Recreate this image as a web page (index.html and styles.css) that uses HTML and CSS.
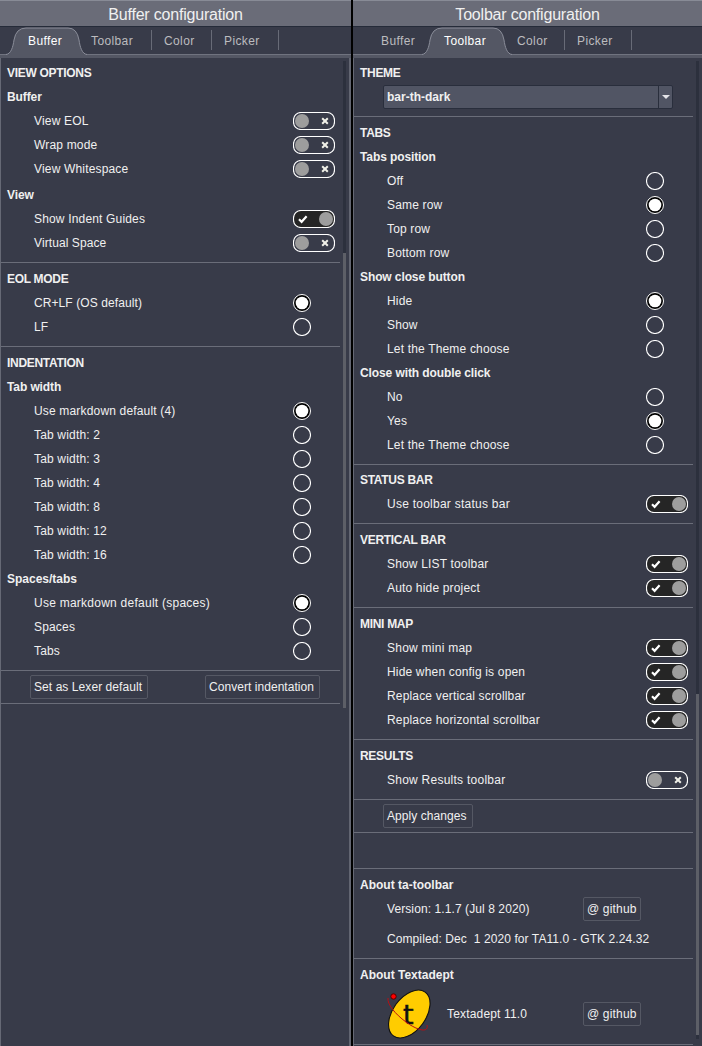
FILE: index.html
```
<!DOCTYPE html>
<html lang="en">
<head>
<meta charset="utf-8">
<title>Configuration</title>
<link rel="stylesheet" href="styles.css">
</head>
<body>
<svg class="defs" width="0" height="0" aria-hidden="true">
  <symbol id="on" viewBox="0 0 42 18"><rect x=".5" y=".5" width="41" height="17" rx="7.500" fill="#252525" stroke="#fff" stroke-width="1.150"/><circle cx="33" cy="9" r="7" fill="#9d9d9d"/><path d="M6 9.300l2.600 2.500 5-5.500" fill="none" stroke="#fff" stroke-width="2.200"/></symbol>
  <symbol id="off" viewBox="0 0 42 18"><rect x=".5" y=".5" width="41" height="17" rx="7.500" fill="none" stroke="#fff" stroke-width="1.150"/><circle cx="9" cy="9" r="7" fill="#9d9d9d"/><path d="M29.200 6.200l5.600 5.600m0-5.600l-5.600 5.600" fill="none" stroke="#f0f0e8" stroke-width="2"/></symbol>
  <symbol id="sel" viewBox="0 0 18 18"><circle cx="9" cy="9" r="8.500" fill="#000" stroke="#fff"/><circle cx="9" cy="9" r="6.300" fill="#fff"/></symbol>
  <symbol id="rad" viewBox="0 0 18 18"><circle cx="9" cy="9" r="8.500" fill="none" stroke="#fff" stroke-width="1.100"/></symbol>
</svg>
<main class="window">
  <section class="panel left">
    <h1 class="title">Buffer configuration</h1>
    <nav class="tabs">
      <svg class="tab-shape" width="82" height="28" viewBox="0 0 82 28"><path d="M0 28V27.500C5 27 7 20 8 13Q10 1 20 1H62Q71 1 73 13C74 20 76 27 81 27.500V28Z" fill="#545764"/><path d="M0 27.500C5 27 7 20 8 13Q10 1 20 1H62Q71 1 73 13C74 20 76 27 81 27.500" fill="none" stroke="#8a8d99"/></svg>
      <span class="tab active t1">Buffer</span><span class="tab t2">Toolbar</span><span class="tab t3 div">Color</span><span class="tab t4 div">Picker</span><span class="tab div"></span>
    </nav>
    <div class="body">
      <h2>VIEW OPTIONS</h2>
      <h3>Buffer</h3>
      <div class="row">View EOL<svg class="toggle"><use href="#off"/></svg></div>
      <div class="row">Wrap mode<svg class="toggle"><use href="#off"/></svg></div>
      <div class="row">View Whitespace<svg class="toggle"><use href="#off"/></svg></div>
      <h3 class="spaced">View</h3>
      <div class="row">Show Indent Guides<svg class="toggle"><use href="#on"/></svg></div>
      <div class="row snug">Virtual Space<svg class="toggle"><use href="#off"/></svg></div>
      <hr>
      <h2>EOL MODE</h2>
      <div class="row snug">CR+LF (OS default)<svg class="radio"><use href="#sel"/></svg></div>
      <div class="row">LF<svg class="radio"><use href="#rad"/></svg></div>
      <hr>
      <h2>INDENTATION</h2>
      <h3>Tab width</h3>
      <div class="row">Use markdown default (4)<svg class="radio"><use href="#sel"/></svg></div>
      <div class="row">Tab width: 2<svg class="radio"><use href="#rad"/></svg></div>
      <div class="row">Tab width: 3<svg class="radio"><use href="#rad"/></svg></div>
      <div class="row">Tab width: 4<svg class="radio"><use href="#rad"/></svg></div>
      <div class="row">Tab width: 8<svg class="radio"><use href="#rad"/></svg></div>
      <div class="row">Tab width: 12<svg class="radio"><use href="#rad"/></svg></div>
      <div class="row">Tab width: 16<svg class="radio"><use href="#rad"/></svg></div>
      <h3 class="loose">Spaces/tabs</h3>
      <div class="row wide">Use markdown default (spaces)<svg class="radio"><use href="#sel"/></svg></div>
      <div class="row">Spaces<svg class="radio"><use href="#rad"/></svg></div>
      <div class="row">Tabs<svg class="radio"><use href="#rad"/></svg></div>
      <hr>
      <div class="buttons"><button class="lexer">Set as Lexer default</button><button class="convert">Convert indentation</button></div>
      <hr class="end">
    </div>
    <i class="track"><i class="thumb"></i></i>
  </section>
  <section class="panel right">
    <h1 class="title">Toolbar configuration</h1>
    <nav class="tabs">
      <svg class="tab-shape" width="91" height="28" viewBox="0 0 91 28"><path d="M0 28V27.500C5 27 7 20 8 13Q10 1 20 1H71Q80 1 82 13C83 20 85 27 90 27.500V28Z" fill="#545764"/><path d="M0 27.500C5 27 7 20 8 13Q10 1 20 1H71Q80 1 82 13C83 20 85 27 90 27.500" fill="none" stroke="#8a8d99"/></svg>
      <span class="tab t1">Buffer</span><span class="tab active t2">Toolbar</span><span class="tab t3">Color</span><span class="tab t4 div">Picker</span><span class="tab div"></span>
    </nav>
    <div class="body">
      <h2>THEME</h2>
      <div class="combo"><b>bar-th-dark</b><span class="arrow"><svg width="8" height="4"><path d="M0 0h8L4 4z" fill="#e4e4e8"/></svg></span></div>
      <hr>
      <h2>TABS</h2>
      <h3>Tabs position</h3>
      <div class="row">Off<svg class="radio"><use href="#rad"/></svg></div>
      <div class="row">Same row<svg class="radio"><use href="#sel"/></svg></div>
      <div class="row">Top row<svg class="radio"><use href="#rad"/></svg></div>
      <div class="row">Bottom row<svg class="radio"><use href="#rad"/></svg></div>
      <h3>Show close button</h3>
      <div class="row">Hide<svg class="radio"><use href="#sel"/></svg></div>
      <div class="row">Show<svg class="radio"><use href="#rad"/></svg></div>
      <div class="row">Let the Theme choose<svg class="radio"><use href="#rad"/></svg></div>
      <h3>Close with double click</h3>
      <div class="row">No<svg class="radio"><use href="#rad"/></svg></div>
      <div class="row">Yes<svg class="radio"><use href="#sel"/></svg></div>
      <div class="row">Let the Theme choose<svg class="radio"><use href="#rad"/></svg></div>
      <hr class="tight">
      <h2>STATUS BAR</h2>
      <div class="row wide">Use toolbar status bar<svg class="toggle"><use href="#on"/></svg></div>
      <hr>
      <h2>VERTICAL BAR</h2>
      <div class="row">Show LIST toolbar<svg class="toggle"><use href="#on"/></svg></div>
      <div class="row">Auto hide project<svg class="toggle"><use href="#on"/></svg></div>
      <hr>
      <h2>MINI MAP</h2>
      <div class="row wide">Show mini map<svg class="toggle"><use href="#on"/></svg></div>
      <div class="row">Hide when config is open<svg class="toggle"><use href="#on"/></svg></div>
      <div class="row">Replace vertical scrollbar<svg class="toggle"><use href="#on"/></svg></div>
      <div class="row">Replace horizontal scrollbar<svg class="toggle"><use href="#on"/></svg></div>
      <hr>
      <h2>RESULTS</h2>
      <div class="row wide">Show Results toolbar<svg class="toggle"><use href="#off"/></svg></div>
      <hr>
      <div class="buttons"><button class="apply">Apply changes</button></div>
      <hr class="end">
      <hr class="blank">
      <h3 class="loose">About ta-toolbar</h3>
      <div class="row about snug">Version: 1.1.7 (Jul 8 2020)<button class="git">@ github</button></div>
      <div class="row compiled snug">Compiled: Dec&nbsp; 1 2020 for TA11.0 - GTK 2.24.32</div>
      <hr>
      <h3 class="loose">About Textadept</h3>
      <div class="row about logo-row">
        <svg class="logo" width="48" height="54" viewBox="0 0 48 54"><ellipse cx="24.300" cy="27" rx="27" ry="16.500" transform="rotate(-54 24.300 27)" fill="#fc0" stroke="#111" stroke-width="1.100"/><text x="18" y="36.500" class="logo-t">t</text><path d="M3 11C2 17 10 27 21 35C33 44 44 46 42 38" fill="none" stroke="#b80f14"/><circle cx="8.500" cy="9.500" r="2.700" fill="#f00" stroke="#500"/></svg>
        Textadept 11.0<button class="git">@ github</button>
      </div>
      <hr class="last">
    </div>
    <i class="track"><i class="thumb"></i></i>
  </section>
</main>
</body>
</html>
```

FILE: styles.css
```
* { box-sizing: border-box; }
body { margin: 0; background: #000; color: #f0f0f0; font: 12px/24px "Liberation Sans", Arial, sans-serif; letter-spacing: .17px; }
.defs { position: absolute; }
.window { display: flex; gap: 2px; width: 702px; height: 1046px; overflow: hidden; }
.panel { position: relative; width: 351px; height: 1046px; background: #383b49; }
.right { width: 349px; }
h1, h2, h3 { margin: 0; font-size: 12px; height: 24px; }
h2 { letter-spacing: -.3px; padding-left: 6px; }
h3 { letter-spacing: -.1px; padding-left: 6px; }
.loose { letter-spacing: 0; }
.spaced { margin-top: 2px; }
.title { height: 27px; background: #6a6c78; border-top: 1px solid #888b96; border-bottom: 1px solid #252b39; font-weight: 400; font-size: 16px; line-height: 27px; letter-spacing: -.2px; text-align: center; }
.tabs { position: relative; display: flex; height: 31px; padding: 3px 0 0 28px; border-bottom: 3px solid #545764; box-shadow: inset 0 -1px #70737f; color: #bcbcbf; letter-spacing: .38px; }
.tab { position: relative; height: 20px; line-height: 22px; }
.div { border-left: 1px solid #686b77; }
.active { color: #fff; }
.t1 { width: 63px; }
.t2 { width: 60px; }
.t3 { width: 60px; padding-left: 12px; }
.right .t3 { padding-left: 13px; }
.t4 { width: 67px; padding-left: 12px; }
.tab-shape { position: absolute; left: 6px; top: 0; }
.right .tab-shape { left: 69px; }
.body { height: 988px; border-left: 1px solid #666975; }
.left .body { border-right: 2px solid #626571; }
.row { display: flex; align-items: center; height: 24px; width: 334px; padding-left: 33px; }
.snug { letter-spacing: .09px; }
.wide { letter-spacing: .25px; }
.toggle { width: 42px; height: 18px; margin-left: auto; }
.radio { width: 18px; height: 18px; margin-left: auto; margin-right: 24px; }
.body::before { content: ""; display: block; height: 3px; }
hr { width: 339px; height: 1px; margin: 7px 0 4px; border: 0; background: #6a6d79; }
.tight { margin-bottom: 3px; }
.end { margin: 4px 0 0; }
.blank { margin-top: 35px; }
.last { margin: 3px 0 0; }
button { height: 24px; padding: 0 0 0 3px; border: 1px solid #555864; border-radius: 2px; background: #383b49; color: inherit; font: inherit; letter-spacing: .07px; line-height: 22px; text-align: left; white-space: nowrap; }
.buttons { display: flex; height: 24px; padding-left: 29px; }
.lexer { width: 118px; margin-right: 57px; }
.convert { width: 115px; letter-spacing: .05px; }
.apply { width: 90px; }
.about { position: relative; width: 287px; }
.git { width: 58px; margin-left: auto; letter-spacing: .17px; }
.compiled { margin-top: 6px; }
.logo-row { height: 54px; padding-left: 93px; }
.logo { position: absolute; left: 31px; top: 0; }
.logo-t { font: 27px "DejaVu Sans", sans-serif; fill: #111; stroke: #111; stroke-width: .5px; }
.combo { display: flex; width: 290px; height: 24px; margin-left: 29px; padding-left: 3px; border: 1px solid #292e3c; border-radius: 2px; background: #515564; line-height: 22px; letter-spacing: 0; }
.arrow { display: flex; align-items: center; justify-content: center; width: 14px; margin-left: auto; border-left: 1px solid #292e3c; }
.track { position: absolute; left: 343px; top: 61px; width: 3px; height: 647px; background: #2c303d; }
.right .track { height: 978px; }
.thumb { position: absolute; left: 0; top: 192px; width: 3px; height: 455px; background: #5d5f67; }
.right .thumb { top: 633px; height: 341px; }
```
